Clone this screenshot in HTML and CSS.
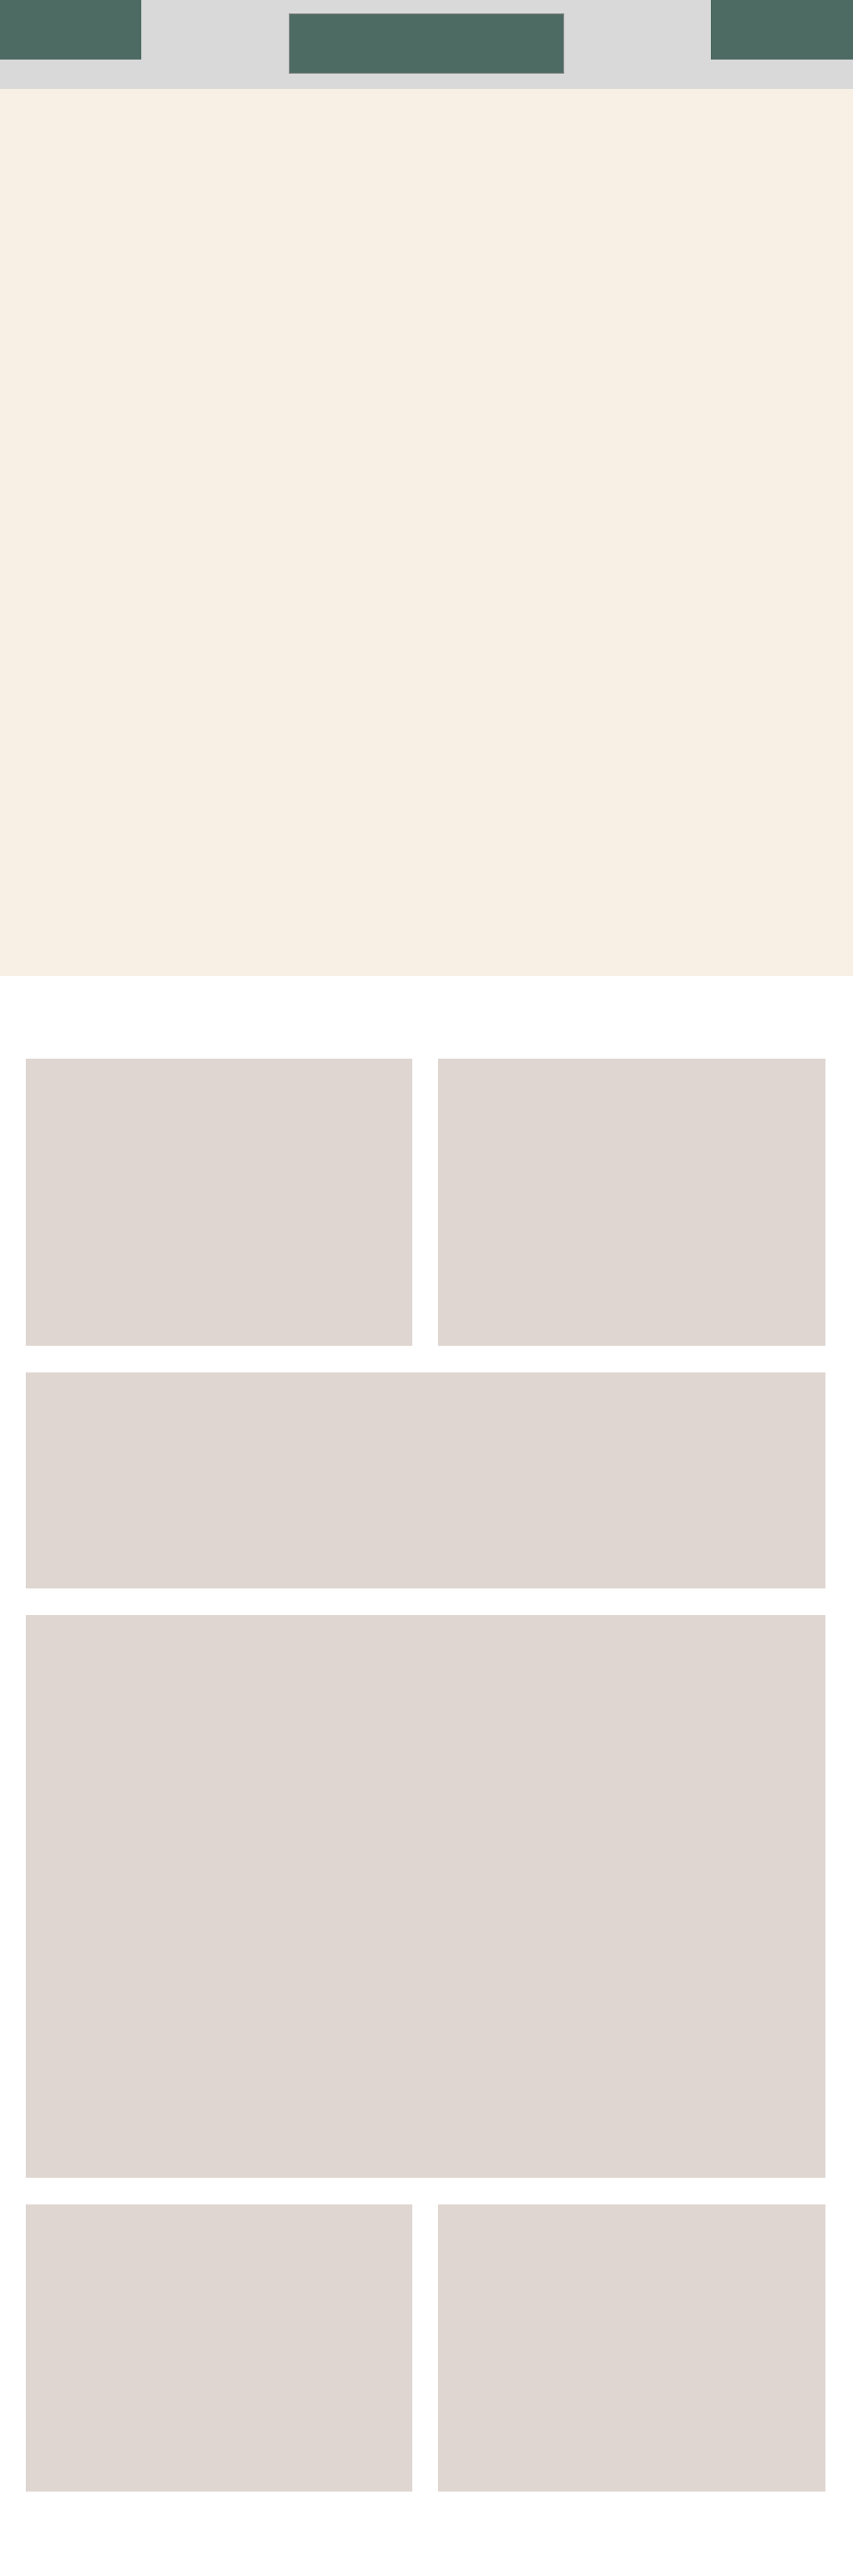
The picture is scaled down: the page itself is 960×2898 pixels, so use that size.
FILE: index.html
```html
<!DOCTYPE html>
<html>
<head>
<meta charset="utf-8">
<link rel="stylesheet" href="styles.css">
</head>
<body>
<header class="top">
  <div class="blk blk-left"></div>
  <div class="blk blk-center"></div>
  <div class="blk blk-right"></div>
</header>
<section class="hero"></section>
<main class="cards">
  <div class="card h1"></div>
  <div class="card h1"></div>
  <div class="card wide h2"></div>
  <div class="card wide h3"></div>
  <div class="card h1"></div>
  <div class="card h1"></div>
</main>
</body>
</html>
```
FILE: styles.css
```css
html, body {
  margin: 0;
  padding: 0;
  background: #ffffff;
  font-family: "Liberation Sans", Arial, sans-serif;
}
.top {
  height: 100px;
  background: #d9d9d9;
  display: grid;
  grid-template-columns: 159px 1fr 310px 1fr 160px;
  align-items: start;
}
.blk { background: #4e6b63; }
.blk-left { grid-column: 1; height: 67px; }
.blk-center {
  grid-column: 3;
  height: 66px;
  margin-top: 15px;
  border: 1px solid #8f8f8f;
}
.blk-right { grid-column: 5; height: 67px; }
.hero {
  height: 998px;
  background: #f8f0e5;
}
.cards {
  width: 900px;
  margin-left: 29px;
  padding: 93px 0 95px;
  display: grid;
  grid-template-columns: 435px 436px;
  column-gap: 29px;
  row-gap: 30px;
}
.card { background: #dfd6d1; }
.wide { grid-column: 1 / 3; }
.h1 { height: 323px; }
.h2 { height: 243px; }
.h3 { height: 633px; }
```
